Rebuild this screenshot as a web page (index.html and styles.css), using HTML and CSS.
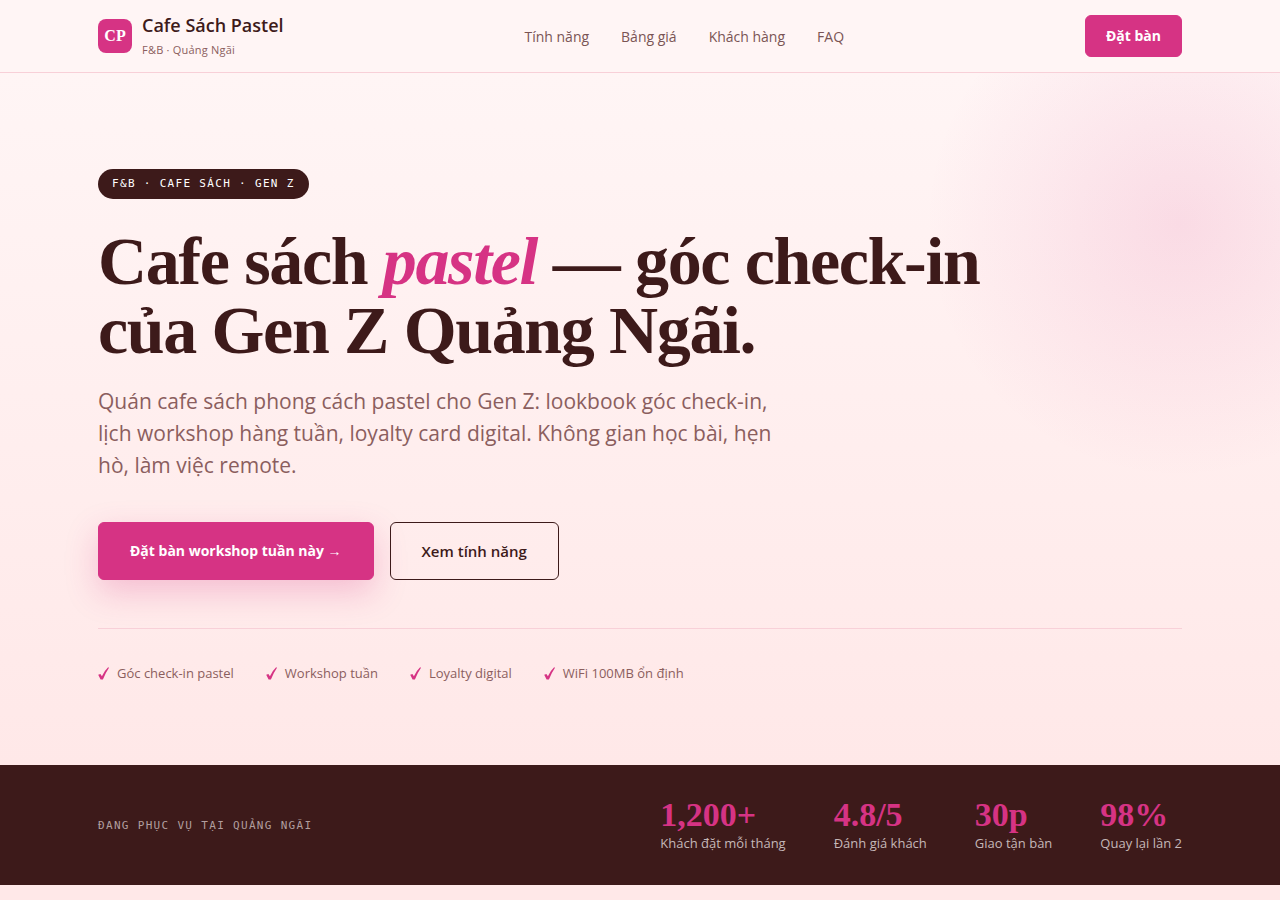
FILE: index.html
```html
<!DOCTYPE html>
<html lang="vi">
<head>
    <meta charset="UTF-8">
    <meta name="viewport" content="width=device-width, initial-scale=1.0">
    <title>Cafe Sách Pastel</title>
    <link rel="stylesheet" href="styles.css">
</head>
<body>

    <header class="site-header">
        <div class="container header-inner">
            <a href="#" class="brand">
                <span class="brand-mark">CP</span>
                <span class="brand-text">
                    <span class="brand-name">Cafe Sách Pastel</span>
                    <span class="brand-sub">F&amp;B · Quảng Ngãi</span>
                </span>
            </a>
            <nav class="main-nav">
                <a href="#features">Tính năng</a>
                <a href="#pricing">Bảng giá</a>
                <a href="#customers">Khách hàng</a>
                <a href="#faq">FAQ</a>
            </nav>
            <button type="button" class="btn btn-small">Đặt bàn</button>
        </div>
    </header>

    <main>
        <section class="hero">
            <div class="container hero-inner">
                <span class="badge">F&amp;B · CAFE SÁCH · GEN Z</span>
                <h1>Cafe sách <em>pastel</em> — góc check-in<br>của Gen Z Quảng Ngãi.</h1>
                <p class="lead">Quán cafe sách phong cách pastel cho Gen Z: lookbook góc check-in,<br>lịch workshop hàng tuần, loyalty card digital. Không gian học bài, hẹn<br>hò, làm việc remote.</p>
                <div class="actions">
                    <button type="button" class="btn btn-primary">Đặt bàn workshop tuần này →</button>
                    <button type="button" class="btn btn-outline">Xem tính năng</button>
                </div>
                <ul class="perks">
                    <li><svg class="check" viewBox="0 0 11 13" aria-hidden="true"><path d="M0.2 7.8 L2.4 6.9 L3.9 9.2 Q6 4.3 10.1 0.3 L11 0.7 Q7.4 6 4.9 12.4 L2.6 12.4 Z"/></svg>Góc check-in pastel</li>
                    <li><svg class="check" viewBox="0 0 11 13" aria-hidden="true"><path d="M0.2 7.8 L2.4 6.9 L3.9 9.2 Q6 4.3 10.1 0.3 L11 0.7 Q7.4 6 4.9 12.4 L2.6 12.4 Z"/></svg>Workshop tuần</li>
                    <li><svg class="check" viewBox="0 0 11 13" aria-hidden="true"><path d="M0.2 7.8 L2.4 6.9 L3.9 9.2 Q6 4.3 10.1 0.3 L11 0.7 Q7.4 6 4.9 12.4 L2.6 12.4 Z"/></svg>Loyalty digital</li>
                    <li><svg class="check" viewBox="0 0 11 13" aria-hidden="true"><path d="M0.2 7.8 L2.4 6.9 L3.9 9.2 Q6 4.3 10.1 0.3 L11 0.7 Q7.4 6 4.9 12.4 L2.6 12.4 Z"/></svg>WiFi 100MB ổn định</li>
                </ul>
            </div>
        </section>

        <section class="stats">
            <div class="container stats-inner">
                <p class="stats-title">ĐANG PHỤC VỤ TẠI QUẢNG NGÃI</p>
                <dl class="stats-list">
                    <div class="stat"><dd>1,200+</dd><dt>Khách đặt mỗi tháng</dt></div>
                    <div class="stat"><dd>4.8/5</dd><dt>Đánh giá khách</dt></div>
                    <div class="stat"><dd>30p</dd><dt>Giao tận bàn</dt></div>
                    <div class="stat"><dd>98%</dd><dt>Quay lại lần 2</dt></div>
                </dl>
            </div>
        </section>
    </main>

</body>
</html>
```

FILE: styles.css
```css
:root {
    --pink: #d63384;
    --dark: #3d1a1a;
    --muted: #8b5e5e;
    --cream: #fff5f5;
    --blush: #ffe8e8;
    --line: #f8d0d8;
    --sans: "Open Sans", "Noto Sans", sans-serif;
    --serif: "Liberation Serif", "Times New Roman", serif;
    --mono: "DejaVu Sans Mono", "Liberation Mono", monospace;
}

* {
    box-sizing: border-box;
    margin: 0;
    padding: 0;
}

body {
    font-family: var(--sans);
    color: var(--dark);
    background: var(--blush);
}

a {
    color: inherit;
    text-decoration: none;
}

.container {
    max-width: 1180px;
    margin: 0 auto;
    padding: 0 48px;
}

/* header */
.site-header {
    background: var(--cream);
    border-bottom: 1px solid var(--line);
}
.header-inner {
    display: flex;
    align-items: center;
    justify-content: space-between;
    min-height: 72px;
}
.brand {
    display: flex;
    align-items: center;
    gap: 10px;
}
.brand-mark {
    display: grid;
    place-items: center;
    width: 34px;
    height: 34px;
    border-radius: 8px;
    background: var(--pink);
    color: #fff;
    font-family: var(--serif);
    font-size: 16px;
    font-weight: 700;
}
.brand-text {
    display: flex;
    flex-direction: column;
}
.brand-name {
    font-size: 18px;
    font-weight: 600;
    line-height: 28px;
}
.brand-sub {
    font-size: 11px;
    line-height: 22px;
    letter-spacing: 0.02em;
    color: var(--muted);
}
.main-nav {
    display: flex;
    gap: 32px;
    font-size: 14px;
    color: #7a5454;
}

.btn {
    border: 1px solid var(--pink);
    border-radius: 6px;
    background: var(--pink);
    color: #fff;
    font-family: var(--sans);
    font-size: 15px;
    font-weight: 600;
    line-height: 24px;
    padding: 16px 31px;
    cursor: pointer;
}
.btn-small {
    font-size: 14px;
    font-weight: 700;
    line-height: 20px;
    padding: 10px 20px;
}
.btn-primary {
    font-size: 14px;
    font-weight: 700;
    box-shadow: 0 12px 32px rgba(214, 51, 132, 0.25);
}
.btn-outline {
    background: transparent;
    border-color: var(--dark);
    color: var(--dark);
}

/* hero */
.hero {
    position: relative;
    overflow: hidden;
    background: linear-gradient(180deg, var(--cream), var(--blush));
    padding: 96px 0 80px;
}
.hero::before {
    content: "";
    position: absolute;
    top: -150px;
    right: -200px;
    width: 600px;
    height: 600px;
    background: radial-gradient(circle, rgba(214, 51, 132, 0.12), transparent 60%);
}
.hero-inner {
    position: relative;
}
.badge {
    display: block;
    width: fit-content;
    padding: 0 14px;
    border-radius: 15px;
    background: var(--dark);
    color: #fff;
    font-family: var(--mono);
    font-size: 11px;
    line-height: 30px;
    letter-spacing: 0.12em;
}
h1 {
    margin-top: 28px;
    font-family: var(--serif);
    font-size: 68px;
    font-weight: 700;
    line-height: 69px;
    letter-spacing: -0.02em;
}
h1 em {
    color: var(--pink);
}
.lead {
    margin-top: 20px;
    font-size: 21px;
    line-height: 32px;
    color: var(--muted);
}
.actions {
    display: flex;
    gap: 16px;
    margin-top: 41px;
}
.perks {
    display: flex;
    flex-wrap: wrap;
    gap: 32px;
    margin-top: 48px;
    padding-top: 32px;
    border-top: 1px solid var(--line);
    list-style: none;
    font-size: 13px;
    line-height: 24px;
    color: var(--muted);
}
.perks li {
    display: flex;
    align-items: center;
    gap: 8px;
}
.check {
    width: 11px;
    height: 13px;
    fill: var(--pink);
}

/* stats */
.stats {
    background: var(--dark);
    padding: 32px 0;
}
.stats-inner {
    display: flex;
    align-items: center;
    justify-content: space-between;
}
.stats-title {
    font-family: var(--mono);
    font-size: 11px;
    letter-spacing: 0.12em;
    color: #b19e9e;
}
.stats-list {
    display: flex;
    gap: 48px;
}
.stat dd {
    font-family: var(--serif);
    font-size: 34px;
    font-weight: 700;
    line-height: 36px;
    color: var(--pink);
}
.stat dt {
    font-size: 13px;
    line-height: 20px;
    color: #c5b8b8;
}
```
